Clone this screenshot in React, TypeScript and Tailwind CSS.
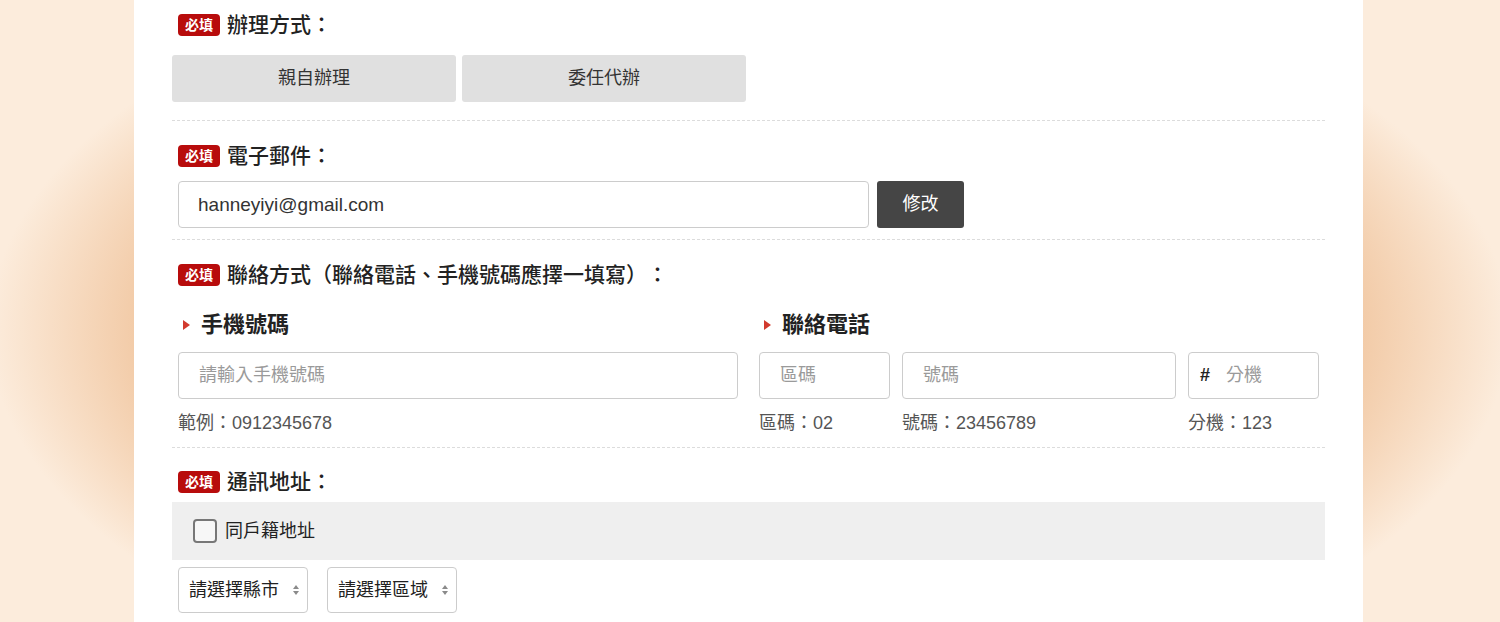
import React from "react";

function Badge() {
  return (
    <span className="inline-flex h-[22px] w-[42px] items-center justify-center rounded-[4px] bg-[#b80c0c] text-[14px] font-bold leading-none text-white">
      必填
    </span>
  );
}

function P({ c, align }: { c: string; align: "l" | "c" | "r" }) {
  const cls =
    align === "l"
      ? "inline-block w-[21px] text-left"
      : align === "r"
        ? "inline-block w-[21px] text-right"
        : "inline-block w-[21px] text-center";
  return <span className={cls}>{c}</span>;
}

function Title({ children }: { children: React.ReactNode }) {
  return (
    <div className="ml-[6px] flex h-[30px] items-center gap-[7px]">
      <Badge />
      <span className="-translate-y-[2px] whitespace-nowrap font-['Noto_Sans_CJK_TC',sans-serif] text-[21px] font-medium leading-none text-[#222]">
        {children}
      </span>
    </div>
  );
}

function Sub({ children }: { children: React.ReactNode }) {
  return (
    <div className="flex h-[30px] items-center gap-[11px] pl-[5px]">
      <svg width="7" height="10" viewBox="0 0 7 10">
        <path d="M0 0 L7 5 L0 10 Z" fill="#d23a2e" />
      </svg>
      <span className="text-[22px] font-bold leading-none text-[#222]">{children}</span>
    </div>
  );
}

function Dashed() {
  return <div className="border-t border-dashed border-[#dcdcdc]" />;
}

function Arrows() {
  return (
    <svg width="8" height="12" viewBox="0 0 8 12" className="shrink-0">
      <path d="M4 1 L7 5 L1 5 Z" fill="#8a8a8a" />
      <path d="M4 11 L7 7 L1 7 Z" fill="#8a8a8a" />
    </svg>
  );
}

const inputCls =
  "h-[47px] rounded-[4px] border border-[#cccccc] bg-white px-[20px] text-[18px] text-[#333] outline-none placeholder:text-[#9a9a9a]";

export default function App() {
  return (
    <div
      lang="zh-Hant"
      className="min-h-[622px] overflow-hidden bg-[#fcecdc] bg-[radial-gradient(ellipse_760px_390px_at_749px_330px,#eebf98_0%,#f2caa6_80%,#fcecdc_100%)] pl-[134px] font-['Liberation_Sans','Noto_Sans_CJK_TC',sans-serif] [text-spacing-trim:space-all]"
    >
      <div className="h-[622px] w-[1229px] bg-white px-[38px]">
        {/* 辦理方式 */}
        <div className="pt-[10px] pb-[18px]">
          <Title>
            辦理方式<P c="：" align="c" />
          </Title>
          <div className="mt-[15px] flex gap-[6px]">
            <div className="flex h-[47px] w-[284px] items-center justify-center rounded-[3px] bg-[#e0e0e0] text-[18px] text-[#333]">
              親自辦理
            </div>
            <div className="flex h-[47px] w-[284px] items-center justify-center rounded-[3px] bg-[#e0e0e0] text-[18px] text-[#333]">
              委任代辦
            </div>
          </div>
        </div>
        <Dashed />

        {/* 電子郵件 */}
        <div className="pt-[20px] pb-[11px]">
          <Title>
            電子郵件<P c="：" align="c" />
          </Title>
          <div className="mt-[10px] ml-[6px] flex gap-[8px]">
            <input
              className="h-[47px] w-[691px] rounded-[4px] border border-[#cccccc] bg-white pl-[19px] text-[19px] text-[#333] outline-none"
              defaultValue="hanneyiyi@gmail.com"
            />
            <div className="flex h-[47px] w-[87px] items-center justify-center rounded-[3px] bg-[#454545] text-[18px] text-white">
              修改
            </div>
          </div>
        </div>
        <Dashed />

        {/* 聯絡方式 */}
        <div className="pt-[20px] pb-[12px]">
          <Title>
            聯絡方式<P c="（" align="r" />聯絡電話<P c="、" align="l" />手機號碼應擇一填寫<P c="）" align="l" />
            <P c="：" align="c" />
          </Title>
          <div className="mt-[20px] flex">
            <div className="ml-[6px] w-[560px]">
              <Sub>手機號碼</Sub>
              <input className={`${inputCls} mt-[12px] w-[560px]`} placeholder="請輸入手機號碼" />
              <div className="mt-[12px] h-[24px] text-[18px] leading-[24px] text-[#555]">範例：0912345678</div>
            </div>
            <div className="ml-[21px] w-[560px]">
              <Sub>聯絡電話</Sub>
              <div className="mt-[12px] flex">
                <input className={`${inputCls} w-[131px]`} placeholder="區碼" />
                <input className={`${inputCls} ml-[12px] w-[274px]`} placeholder="號碼" />
                <div className="ml-[12px] flex h-[47px] w-[131px] items-center rounded-[4px] border border-[#cccccc] bg-white">
                  <span className="ml-[11px] text-[18px] font-bold text-[#222]">#</span>
                  <input
                    className="ml-[16px] w-[80px] bg-white text-[18px] outline-none placeholder:text-[#9a9a9a]"
                    placeholder="分機"
                  />
                </div>
              </div>
              <div className="mt-[12px] flex h-[24px] text-[18px] leading-[24px] text-[#555]">
                <span className="w-[143px]">區碼：02</span>
                <span className="w-[286px]">號碼：23456789</span>
                <span>分機：123</span>
              </div>
            </div>
          </div>
        </div>
        <Dashed />

        {/* 通訊地址 */}
        <div className="pt-[19px]">
          <Title>
            通訊地址<P c="：" align="c" />
          </Title>
          <div className="mt-[5px] flex h-[58px] items-center bg-[#efefef] pl-[21px]">
            <div className="h-[24px] w-[24px] rounded-[4px] border-2 border-[#777] bg-[#f7f7f7]" />
            <span className="ml-[8px] text-[18px] text-[#222]">同戶籍地址</span>
          </div>
          <div className="mt-[7px] ml-[6px] flex gap-[19px]">
            <div className="flex h-[46px] w-[130px] items-center justify-between rounded-[4px] border border-[#cccccc] bg-white pr-[7px] pl-[10px] text-[18px] text-[#222]">
              <span>請選擇縣市</span>
              <Arrows />
            </div>
            <div className="flex h-[46px] w-[130px] items-center justify-between rounded-[4px] border border-[#cccccc] bg-white pr-[7px] pl-[10px] text-[18px] text-[#222]">
              <span>請選擇區域</span>
              <Arrows />
            </div>
          </div>
        </div>
      </div>
    </div>
  );
}
